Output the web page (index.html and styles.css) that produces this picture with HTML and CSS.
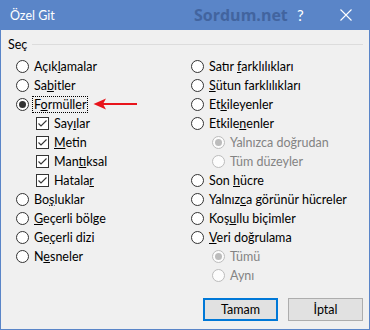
FILE: index.html
```html
<!DOCTYPE html>
<html lang="tr">
<head>
    <meta charset="UTF-8">
    <title>Özel Git</title>
    <link rel="stylesheet" href="styles.css">
</head>
<body>

    <div class="dialog">
        <div class="titlebar">
            <span class="title">Özel Git</span>
            <span class="watermark">Sordum.net</span>
            <span class="help">?</span>
            <svg class="close" width="12" height="12" viewBox="0 0 12 12">
                <path d="M0.5 0.5 L11.5 11.5 M11.5 0.5 L0.5 11.5" stroke="#fff" stroke-width="1.1" fill="none"/>
            </svg>
        </div>

        <div class="content">
            <div class="group-head">
                <span>Seç</span>
                <div class="group-line"></div>
            </div>

            <div class="columns">
                <div class="col">
                    <div class="row"><span class="radio"></span><span>Açık<u>l</u>amalar</span></div>
                    <div class="row"><span class="radio"></span><span>Sa<u>b</u>itler</span></div>
                    <div class="row"><span class="radio checked"></span><span class="focus">F<u>o</u>rmüller</span></div>
                    <div class="row sub"><span class="check"></span><span>Say<u>ı</u>lar</span></div>
                    <div class="row sub"><span class="check"></span><span><u>M</u>etin</span></div>
                    <div class="row sub"><span class="check"></span><span>Man<u>t</u>ıksal</span></div>
                    <div class="row sub"><span class="check"></span><span>Hatala<u>r</u></span></div>
                    <div class="row"><span class="radio"></span><span>Bo<u>ş</u>luklar</span></div>
                    <div class="row"><span class="radio"></span><span><u>G</u>eçerli bölge</span></div>
                    <div class="row"><span class="radio"></span><span>Ge<u>ç</u>erli dizi</span></div>
                    <div class="row"><span class="radio"></span><span>N<u>e</u>sneler</span></div>
                </div>
                <div class="col">
                    <div class="row"><span class="radio"></span><span>Satır <u>f</u>arklılıkları</span></div>
                    <div class="row"><span class="radio"></span><span><u>S</u>ütun farklılıkları</span></div>
                    <div class="row"><span class="radio"></span><span>Et<u>k</u>ileyenler</span></div>
                    <div class="row"><span class="radio"></span><span>Etkile<u>n</u>enler</span></div>
                    <div class="row sub disabled"><span class="radio checked"></span><span>Yalnızca doğrudan</span></div>
                    <div class="row sub disabled"><span class="radio"></span><span>Tüm düzeyler</span></div>
                    <div class="row"><span class="radio"></span><span>Son <u>h</u>ücre</span></div>
                    <div class="row"><span class="radio"></span><span>Yalnız<u>c</u>a görünür hücreler</span></div>
                    <div class="row"><span class="radio"></span><span>Koş<u>u</u>llu biçimler</span></div>
                    <div class="row"><span class="radio"></span><span><u>V</u>eri doğrulama</span></div>
                    <div class="row sub disabled"><span class="radio checked"></span><span>Tümü</span></div>
                    <div class="row sub disabled"><span class="radio"></span><span>Aynı</span></div>
                </div>
            </div>

            <div class="buttons">
                <button type="button" class="btn default">Tamam</button>
                <button type="button" class="btn">İptal</button>
            </div>

            <!-- annotation arrow pointing at Formüller -->
            <svg class="arrow" width="46" height="12" viewBox="0 0 46 12">
                <path d="M10 6 L44 6" stroke="#e8141b" stroke-width="2"/>
                <path d="M0.5 6 L13 0.5 L10 6 L13 11.5 Z" fill="#e8141b"/>
            </svg>
        </div>
    </div>

</body>
</html>
```

FILE: styles.css
```css
body {
    margin: 0;
    font-family: Lato, 'Open Sans', sans-serif;
    font-size: 12.5px;
    color: #000;
}

.dialog {
    width: 370px;
    height: 330px;
    box-sizing: border-box;
    border: 1px solid #5a85c8;
    border-top: none;
    background: #f0f0f0;
    position: relative;
}

.titlebar {
    height: 30px;
    margin: 0 -1px;
    background: #5a85c8;
    color: #fff;
    display: flex;
    align-items: center;
}

.title {
    margin-left: 10px;
    width: 50px;
}

.watermark {
    margin-left: 134px;
    width: 92px;
    font-family: 'Open Sans', sans-serif;
    font-weight: 700;
    font-size: 16px;
    color: #3e5f98;
    opacity: 0.85;
}

.help {
    margin-left: 11px;
    font-size: 15px;
}

.close {
    margin-left: 36px;
}

.content {
    padding: 6px 0 0 0;
    position: relative;
}

.group-head {
    display: flex;
    align-items: center;
    height: 16px;
    padding-left: 7px;
    padding-right: 6px;
}

.group-line {
    flex: 1;
    height: 1px;
    background: #dcdcdc;
    margin-left: 5px;
}

.columns {
    display: grid;
    grid-template-columns: 175px 1fr;
    margin-top: 5px;
    padding-left: 15px;
    height: 228px;
}

.row {
    height: 19px;
    display: flex;
    align-items: center;
    white-space: nowrap;
}

.row.sub {
    padding-left: 20px;
}

.col + .col .row.sub {
    padding-left: 21px;
}

.radio {
    width: 11px;
    height: 11px;
    border: 1px solid #333;
    border-radius: 50%;
    background: #fff;
    margin-right: 5px;
    position: relative;
    flex: none;
}

.radio.checked::after {
    content: "";
    position: absolute;
    left: 2px;
    top: 2px;
    width: 7px;
    height: 7px;
    border-radius: 50%;
    background: #333;
}

.disabled {
    color: #838383;
}

.disabled .radio {
    border-color: #bcbcbc;
    background: #fcfcfc;
}

.disabled .radio.checked::after {
    background: #bcbcbc;
}

.check {
    width: 11px;
    height: 11px;
    border: 1px solid #333;
    background: #fff;
    margin-right: 5px;
    flex: none;
    background-image: url("data:image/svg+xml;charset=US-ASCII,%3Csvg%20xmlns='http://www.w3.org/2000/svg'%20width='11'%20height='11'%20viewBox='0%200%2011%2011'%3E%3Cpath%20d='M1.5%205.5%20L4%208%20L9.5%202.5'%20stroke='%23333'%20stroke-width='1.1'%20fill='none'/%3E%3C/svg%3E");
}

.focus {
    outline: 1px dotted #000;
    padding: 0 1px;
    margin-left: -1px;
    line-height: 15px;
}

.buttons {
    display: flex;
    justify-content: flex-end;
    gap: 10px;
    margin-top: 13px;
    padding-right: 6px;
}

.btn {
    width: 75px;
    height: 23px;
    box-sizing: border-box;
    background: #e1e1e1;
    border: 1px solid #adadad;
    font-family: Lato, 'Open Sans', sans-serif;
    font-size: 12.5px;
    color: #000;
    padding: 0;
}

.btn.default {
    border: 2px solid #0078d7;
}

.arrow {
    position: absolute;
    left: 92px;
    top: 68px;
}
```
